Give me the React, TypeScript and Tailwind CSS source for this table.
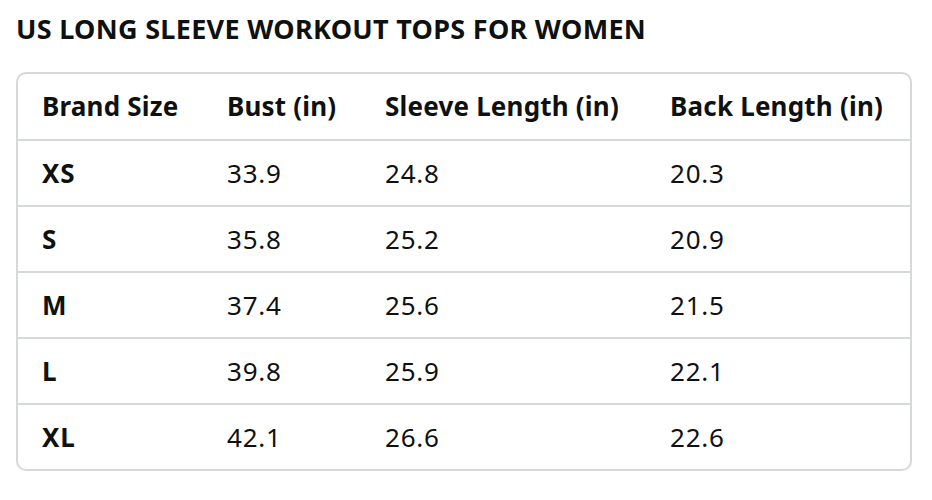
const header = ["Brand Size", "Bust (in)", "Sleeve Length (in)", "Back Length (in)"];

const rows = [
  ["XS", "33.9", "24.8", "20.3"],
  ["S", "35.8", "25.2", "20.9"],
  ["M", "37.4", "25.6", "21.5"],
  ["L", "39.8", "25.9", "22.1"],
  ["XL", "42.1", "26.6", "22.6"],
];

const cols = "grid grid-cols-[185px_158px_285px_1fr]";

export default function App() {
  return (
    <div className="w-[932px] h-[500px] bg-white text-[#0f1111] font-['Noto_Sans',sans-serif] pt-[10px] px-4">
      <h1 className="text-[27px] font-bold leading-[38px] tracking-[0.3px]">
        US LONG SLEEVE WORKOUT TOPS FOR WOMEN
      </h1>

      <div className="mt-[24px] w-[896px] border-2 border-[#d5d9d9] rounded-[10px] overflow-hidden">
        <div className={`${cols} h-[65px] items-center font-bold text-[26px] tracking-[0.2px]`}>
          {header.map((h) => (
            <div key={h} className="pl-6 whitespace-nowrap">
              {h}
            </div>
          ))}
        </div>
        {rows.map((r) => (
          <div key={r[0]} className={`${cols} h-[66px] items-center border-t-2 border-[#d5d9d9] text-[26px] tracking-[0.8px]`}>
            {r.map((c, i) => (
              <div key={i} className={`pl-6 ${i === 0 ? "font-bold" : ""}`}>
                {c}
              </div>
            ))}
          </div>
        ))}
      </div>
    </div>
  );
}
